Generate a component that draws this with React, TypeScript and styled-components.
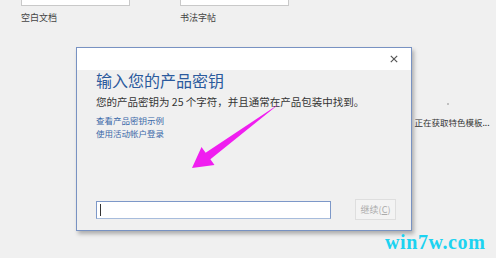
import styled, { createGlobalStyle } from "styled-components";

const GlobalStyle = createGlobalStyle`
  html, body {
    margin: 0;
    padding: 0;
    background: #f0f0f0;
    overflow: hidden;
  }
  body {
    font-family: "Noto Sans CJK SC", "Noto Sans", sans-serif;
  }
`;

const Page = styled.div`
  position: relative;
  width: 496px;
  height: 258px;
  background: #f0f0f0;
  overflow: hidden;
`;

const TemplateRow = styled.div`
  display: flex;
  gap: 50px;
  padding: 0 21px;
`;

const TemplateCard = styled.div`
  width: 109px;
`;

const Thumb = styled.div`
  height: 5px;
  background: #ffffff;
  border: 1px solid #c9c9c9;
  border-top: none;
`;

const TemplateLabel = styled.div`
  margin-top: 6px;
  font-size: 9px;
  line-height: 12px;
  color: #444444;
`;

const StatusArea = styled.div`
  display: flex;
  flex-direction: column;
  align-items: center;
  width: 72px;
  margin: 79px 0 0 416px;
`;

const SpinnerDot = styled.div`
  width: 2px;
  height: 2px;
  border-radius: 50%;
  background: #b0b0b0;
  margin-right: 8px;
`;

const StatusText = styled.div`
  margin-top: 11px;
  font-size: 8.5px;
  line-height: 12px;
  color: #333333;
  white-space: nowrap;
`;

const Dialog = styled.div`
  position: absolute;
  left: 76px;
  top: 47px;
  width: 336px;
  height: 184px;
  box-sizing: border-box;
  display: flex;
  flex-direction: column;
  background: #f0f0f0;
  border: 1px solid #7892c2;
  box-shadow: 2px 3px 4px rgba(0, 0, 0, 0.28);
`;

const TitleBar = styled.div`
  height: 22px;
  display: flex;
  justify-content: flex-end;
  align-items: center;
  padding-right: 13px;
  background: #ffffff;
`;

const CloseButton = styled.button`
  display: flex;
  padding: 0;
  border: none;
  background: transparent;
`;

const DialogBody = styled.div`
  flex: 1;
  display: flex;
  flex-direction: column;
  padding: 0 15px 10px 19px;
`;

const Heading = styled.h1`
  margin: 0;
  font-size: 16px;
  line-height: 20px;
  font-weight: 400;
  color: #2b5a9d;
`;

const Description = styled.p`
  margin: 5px 0 0;
  font-size: 10.5px;
  line-height: 14px;
  color: #353535;
`;

const LinkList = styled.div`
  display: flex;
  flex-direction: column;
  margin-top: 5px;
`;

const HelpLink = styled.a`
  font-size: 8.5px;
  line-height: 13px;
  color: #3b68a8;
  text-decoration: none;
`;

const KeyRow = styled.div`
  margin-top: auto;
  display: flex;
  align-items: center;
  justify-content: space-between;
`;

const KeyInput = styled.div`
  position: relative;
  width: 235px;
  height: 18px;
  box-sizing: border-box;
  background: #ffffff;
  border: 1px solid #7d98c8;
  border-bottom-color: #a7bcdc;
`;

const Caret = styled.span`
  position: absolute;
  left: 3px;
  top: 2px;
  width: 1px;
  height: 12px;
  background: #333333;
`;

const ContinueButton = styled.button`
  width: 41px;
  height: 21px;
  box-sizing: border-box;
  padding: 0;
  border: 1px solid #dedede;
  background: #f3f3f3;
  font-family: "Noto Sans CJK SC", "Noto Sans", sans-serif;
  font-size: 9px;
  color: #ababab;
  u {
    text-decoration: underline;
  }
`;

const Arrow = styled.svg`
  position: absolute;
  left: 185px;
  top: 100px;
`;

const Watermark = styled.div`
  position: absolute;
  left: 385px;
  top: 232px;
  font-family: "Liberation Serif", "DejaVu Serif", serif;
  font-weight: 700;
  font-size: 20px;
  line-height: 1;
  letter-spacing: 0.6px;
  color: #1cd3f1;
`;

export default function App(): JSX.Element {
  return (
    <Page>
      <GlobalStyle />
      <TemplateRow>
        <TemplateCard>
          <Thumb />
          <TemplateLabel>空白文档</TemplateLabel>
        </TemplateCard>
        <TemplateCard>
          <Thumb />
          <TemplateLabel>书法字帖</TemplateLabel>
        </TemplateCard>
      </TemplateRow>
      <StatusArea>
        <SpinnerDot />
        <StatusText>正在获取特色模板...</StatusText>
      </StatusArea>

      <Dialog>
        <TitleBar>
          <CloseButton aria-label="关闭">
            <svg width="8" height="8" viewBox="0 0 8 8">
              <path d="M0.8 0.8L7.2 7.2M7.2 0.8L0.8 7.2" stroke="#555" strokeWidth="1.2" />
            </svg>
          </CloseButton>
        </TitleBar>
        <DialogBody>
          <Heading>输入您的产品密钥</Heading>
          <Description>您的产品密钥为 25 个字符，并且通常在产品包装中找到。</Description>
          <LinkList>
            <HelpLink href="#">查看产品密钥示例</HelpLink>
            <HelpLink href="#">使用活动帐户登录</HelpLink>
          </LinkList>
          <KeyRow>
            <KeyInput>
              <Caret />
            </KeyInput>
            <ContinueButton disabled>
              继续(<u>C</u>)
            </ContinueButton>
          </KeyRow>
        </DialogBody>
      </Dialog>

      <Arrow width="100" height="75" viewBox="0 0 100 75">
        <polygon
          points="7,68 16.5,47 20.6,52.8 94,4 25.4,59.2 29.5,65"
          fill="#f01ef0"
        />
      </Arrow>

      <Watermark>win7w.com</Watermark>
    </Page>
  );
}
